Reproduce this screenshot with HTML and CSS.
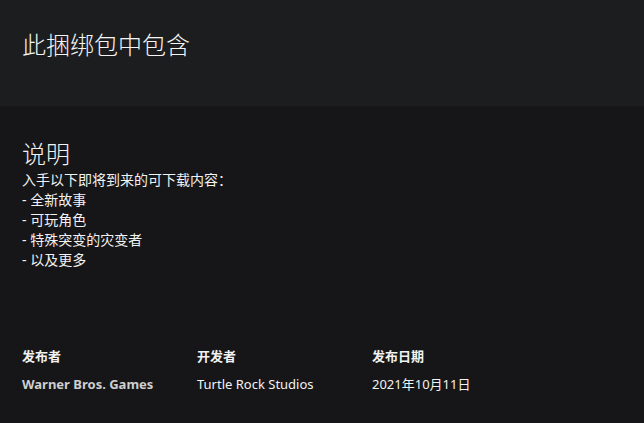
FILE: index.html
```html
<!DOCTYPE html>
<html lang="zh-CN">
<head>
    <meta charset="UTF-8">
    <title>此捆绑包中包含</title>
    <link rel="stylesheet" href="styles.css">
</head>
<body>
    <div class="bundle">
        <h2>此捆绑包中包含</h2>
    </div>

    <div class="details">
        <h3>说明</h3>
        <div class="desc">
            <p>入手以下即将到来的可下载内容：</p>
            <p>- 全新故事</p>
            <p>- 可玩角色</p>
            <p>- 特殊突变的灾变者</p>
            <p>- 以及更多</p>
        </div>

        <div class="info">
            <div class="info-col">
                <div class="info-label">发布者</div>
                <div class="info-value link">Warner Bros. Games</div>
            </div>
            <div class="info-col">
                <div class="info-label">开发者</div>
                <div class="info-value">Turtle Rock Studios</div>
            </div>
            <div class="info-col">
                <div class="info-label">发布日期</div>
                <div class="info-value">2021年10月11日</div>
            </div>
        </div>
    </div>
</body>
</html>
```

FILE: styles.css
```css
body { margin: 0; background: #161618; color: #f2f2f2; font-family: "Noto Sans", "Noto Sans CJK SC", sans-serif; }
.bundle { background: #1c1d1f; height: 106px; padding: 29px 22px 0; box-sizing: border-box; }
.bundle h2 { margin: 0; font-size: 24px; font-weight: 300; line-height: 32px; color: #f4f4f4; }
.details { padding: 32px 22px 0; }
.details h3 { margin: 0; font-size: 24px; font-weight: 300; line-height: 32px; }
.desc { font-size: 14px; line-height: 20px; }
.desc p { margin: 0; }
.info { display: flex; margin-top: 76px; }
.info-col { width: 175px; }
.info-label { font-size: 13px; font-weight: 700; line-height: 20px; }
.info-value { font-size: 13px; line-height: 20px; margin-top: 8px; }
.info-value.link { font-weight: 700; color: #cfcfcf; }
```
